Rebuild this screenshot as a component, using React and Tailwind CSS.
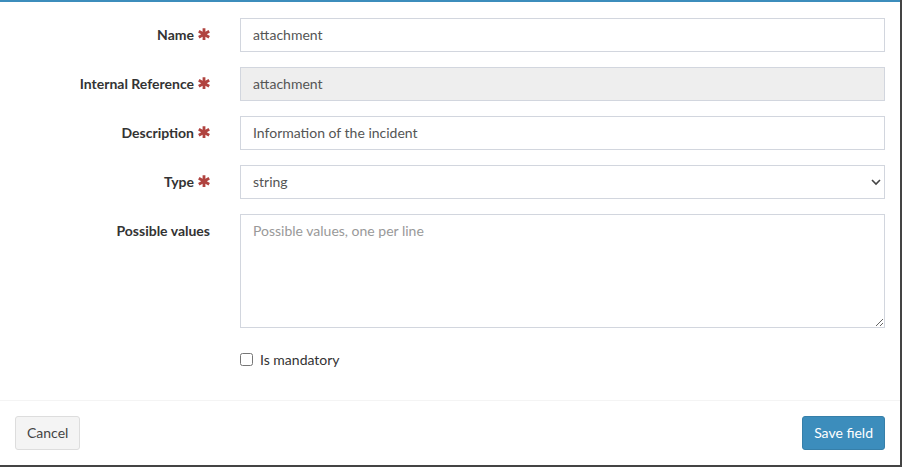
import { useState } from 'react';

function Req() {
  return (
    <svg className="inline-block w-[12px] h-[12px] ml-[4px] -mt-[3px] align-middle text-[#b0433f]" viewBox="0 0 24 24" fill="currentColor">
      <path d="M9.2 0.5h5.6v7.2l6.2-3.6 2.8 4.85L17.6 12.5l6.2 3.55-2.8 4.85-6.2-3.6v7.2H9.2v-7.2L3 20.9 0.2 16.05 6.4 12.5 0.2 8.95 3 4.1l6.2 3.6z" />
    </svg>
  );
}

function Row({ label, required, children, top }) {
  return (
    <div className={`flex ${top ? 'items-start' : 'items-center'} mb-[15px]`}>
      <label className={`w-[225px] shrink-0 pr-[15px] text-right font-bold text-[14px] text-[#333] ${top ? 'pt-[6px]' : 'pb-[2px]'}`}>
        {label}
        {required && <Req />}
      </label>
      <div className="flex-1 px-[15px]">{children}</div>
    </div>
  );
}

const inputCls = 'w-full h-[34px] border border-[#d2d6de] px-[12px] pb-[2px] text-[14px] text-[#555] outline-none';

export default function App() {
  const [name, setName] = useState('attachment');
  const [desc, setDesc] = useState('Information of the incident');
  const [mandatory, setMandatory] = useState(false);

  return (
    <div className="w-[902px] h-[467px] bg-[#444] font-['Lato','Liberation_Sans',sans-serif]">
      <div className="w-[900px] h-[465px] bg-white border-t-2 border-[#3c8dbc] flex flex-col">
        <div className="pt-[16px] pb-[14px]">
          <Row label="Name" required>
            <input className={inputCls} value={name} onChange={(e) => setName(e.target.value)} />
          </Row>
          <Row label="Internal Reference" required>
            <input className={`${inputCls} bg-[#eee]`} value="attachment" readOnly />
          </Row>
          <Row label="Description" required>
            <input className={inputCls} value={desc} onChange={(e) => setDesc(e.target.value)} />
          </Row>
          <Row label="Type" required>
            <div className="relative">
              <select className={`${inputCls} appearance-none bg-white`} defaultValue="string">
                <option value="string">string</option>
                <option value="number">number</option>
                <option value="boolean">boolean</option>
              </select>
              <svg className="absolute right-[4px] top-[13px] w-[10px] h-[8px] text-[#444]" viewBox="0 0 10 8" fill="none" stroke="currentColor" strokeWidth="1.6">
                <path d="M1 2l4 4 4-4" />
              </svg>
            </div>
          </Row>
          <Row label="Possible values" top>
            <textarea
              className="w-full h-[114px] border border-[#d2d6de] px-[12px] py-[5px] text-[14px] text-[#555] outline-none block placeholder:text-[#999]"
              placeholder="Possible values, one per line"
            />
          </Row>
          <div className="flex items-center pl-[240px] pt-[6px]">
            <label className="flex items-center gap-[7px] text-[14px] text-[#333]">
              <input
                type="checkbox"
                checked={mandatory}
                onChange={(e) => setMandatory(e.target.checked)}
                className="w-[13px] h-[13px] m-0"
              />
              Is mandatory
            </label>
          </div>
        </div>
        <div className="mt-auto border-t border-[#f4f4f4] h-[65px] flex items-center justify-between px-[15px]">
          <button className="h-[34px] px-[11px] pb-[2px] rounded-[3px] border border-[#ddd] bg-[#f4f4f4] text-[14px] text-[#444]">Cancel</button>
          <button className="h-[34px] px-[11px] pb-[2px] rounded-[3px] border border-[#367fa9] bg-[#3c8dbc] text-[14px] text-white">Save field</button>
        </div>
      </div>
    </div>
  );
}
